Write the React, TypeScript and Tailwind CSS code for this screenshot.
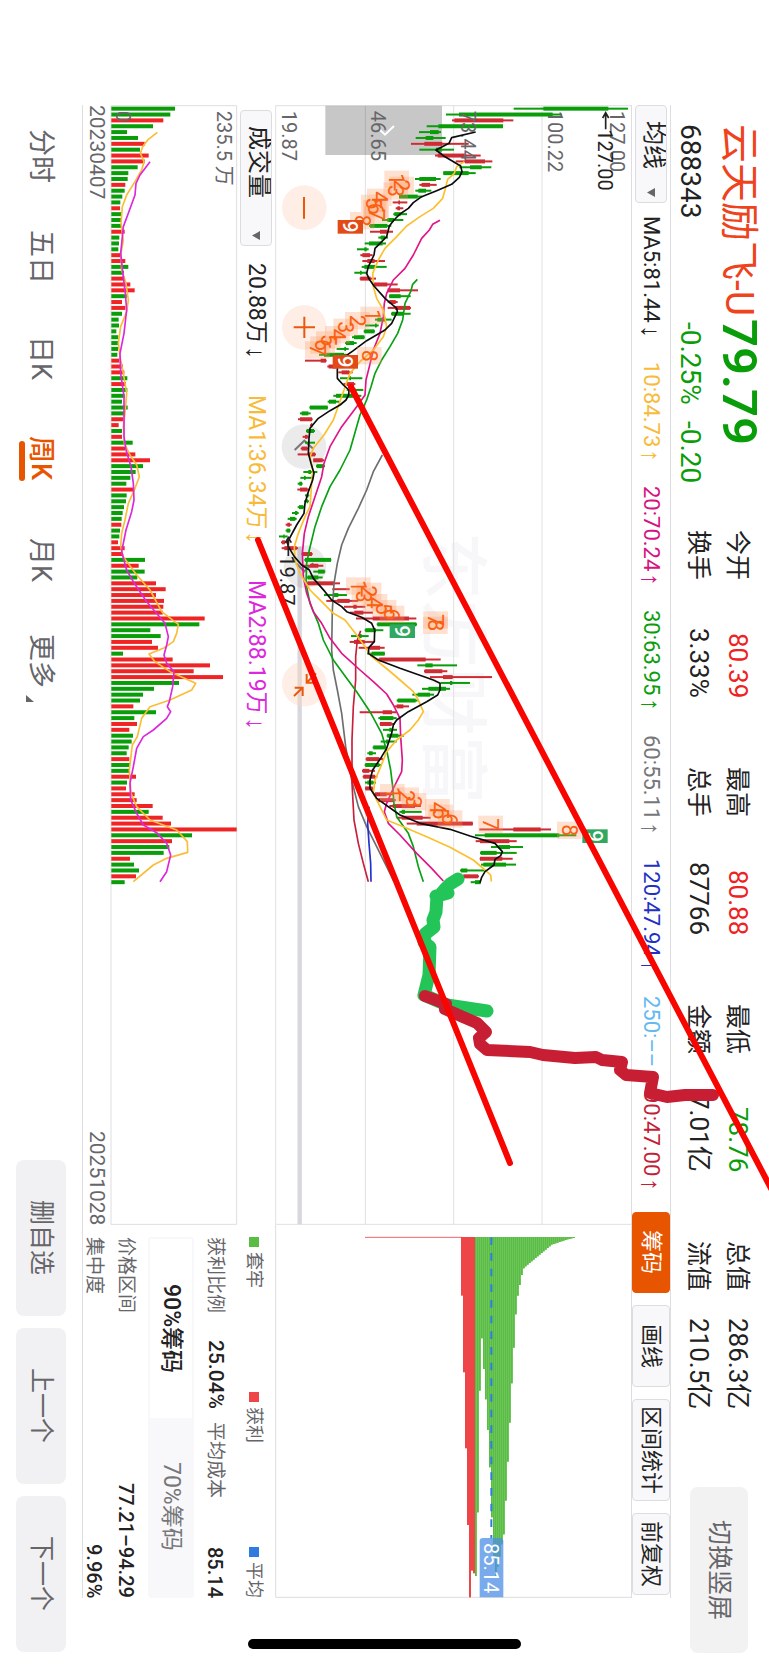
import type { ReactNode } from "react";

const GREEN = "#0a9d0a";
const RED = "#cf2b33";

/* low, bodyLow, bodyHigh, high per week; "u" closes up, "d" closes down */
const CANDLES = `d791,880,1075,1134 d588,627,908,936 u606,613,760,790 d530,565,759,759 d507,540,566,573 d497,527,550,587
u483,523,577,656 d508,558,575,612 u555,563,645,692 u617,645,705,727 d628,660,695,724 d580,580,656,677 d495,508,558,572
u508,515,540,560 d496,505,528,544 d447,447,503,517 u428,445,450,472 u437,442,450,460 d430,433,452,471 d396,412,432,460
d357,360,412,424 u360,390,412,429 d385,392,405,414 d344,357,398,408 d321,343,350,356 u331,337,360,368 u337,352,374,405
d335,343,375,410 d313,330,335,352 u329,331,362,378 u370,372,412,443 u413,413,450,504 d417,418,452,482 u413,418,437,443
u413,435,480,483 d423,425,460,482 d375,382,408,425 d345,375,380,386 d341,343,373,375 d306,312,343,344 d285,288,312,320
d260,283,288,296 d207,222,282,290 u165,212,228,230 u232,236,258,270 u265,275,298,308 d270,298,303,337 u280,290,312,316
d290,312,316,340 d250,258,310,334 d233,237,258,268 d178,180,233,234 d150,155,175,182 u144,150,186,188 u180,183,187,188
d168,170,192,195 u158,165,173,176 d165,175,178,195 u152,155,172,175 u143,175,195,198 u190,190,218,222 d198,200,220,225
d160,175,183,202 d151,162,167,187 d143,148,156,158 u142,150,172,180 d165,170,175,178 d162,170,174,177 d143,147,160,164
d126,135,142,146 d113,120,136,140 u107,112,120,125 d107,110,120,122 d87,100,104,113 u93,96,105,118 u95,103,140,144
u155,157,186,188 d163,165,243,244 u160,180,205,220 d190,204,224,226 d170,173,205,218 u170,172,253,270 u247,249,252,299
d222,252,265,291 u229,262,299,325 u282,310,320,346 u300,313,340,369 u318,368,477,499 d380,382,499,501 d344,346,378,400
d303,325,335,356 u299,312,344,373 u326,360,390,404 d352,365,404,405 u385,388,527,572 d502,526,548,621 u522,524,577,592
u540,579,608,726 d572,600,607,660 d516,535,588,600 d487,503,540,552 d440,443,497,503 u433,440,460,477 u329,398,426,440
d385,390,430,440 u389,390,425,434 d399,418,425,441 d410,412,445,462 d392,408,415,440 d368,370,405,406 d352,357,368,378
u347,349,388,401 d344,346,388,394 u336,338,358,375 u338,340,375,382 d345,352,370,378 u345,346,368,370 u370,375,410,432
u380,385,430,438 u418,428,495,513 d448,455,465,515 u440,455,518,542 u470,500,668,669 u688,790,872,903 d675,704,928,979
u677,690,778,800 d723,745,780,819 d690,692,740,800 u689,690,757,788 d693,700,768,798 d630,633,652,704 u630,640,684,687
d662,675,692,693`
  .split(/\s+/)
  .map((s) => ({ up: s[0] === "u", v: s.slice(1).split(",").map(Number) }));

const VOLUMES = `d525 d511 u490 d459 d381 d414 u434 d420 u446 u434 d413 d385 d383 u376 d374 d367 d361 u360 d363 d363 d364 u374
d358 d357 d355 u360 u376 d385 d372 u375 u391 u404 d380 u366 u376 d366 d356 d357 d349 d355 d354 d354 d352 u358 u369 u373
d382 u378 d382 d374 d366 d383 d374 u369 u356 d366 u366 d398 u375 u406 u450 d429 d407 d391 d379 u400 d380 d378 d372 d368
d365 u364 d360 d358 u354 u374 u368 d435 u416 d434 d412 u468 u497 u468 u492 u490 u488 u614 d598 d451 d482 u456 u474 d369
u518 u630 u581 u669 d537 d462 d429 d420 u400 d468 d403 u411 u388 d399 d395 d386 d380 u388 d390 d388 u408 d381 u378 u404
u410 u458 d446 u488 u513 u710 d576 u516 d508 d491 u390 d402 d417 u408 d374`
  .split(/\s+/)
  .map((s) => ({ up: s[0] === "u", v: Number(s.slice(1)) }));

const weekY = (i: number) => 56 + 17.58 * i;

const MA_LINES = [
  {
    color: "#6e6e6e",
    points:
      "397,1095 370,1145 350,1200 325,1255 295,1315 275,1365 262,1420 252,1480 247,1560 245,1680 250,1740 262,1800 275,1870 287,1970 305,2070 325,2150 350,2210 380,2270 410,2330 432,2375",
  },
  {
    color: "#c8203c",
    points:
      "332,1622 322,1650 317,1700 317,1770 310,1850 306,1950 306,2080 312,2190 325,2260 340,2320 355,2375",
  },
  { color: "#2430d0", points: "357,2150 353,2200 357,2260 362,2320 363,2375" },
  {
    color: "#0aa014",
    points:
      "502,568 488,583 482,605 465,640 458,690 443,730 420,770 395,810 375,850 363,890 350,930 330,975 300,1080 270,1140 240,1190 215,1250 195,1310 178,1380 170,1420 168,1480 180,1540 205,1600 220,1650 250,1710 290,1765 320,1805 360,1865 395,1930 412,1990 422,2040 428,2090 432,2140 440,2180 475,2230 490,2270 505,2330 520,2375",
  },
  {
    color: "#e01488",
    points:
      "570,391 548,403 538,420 515,445 490,495 465,535 430,570 410,610 403,640 400,680 390,730 370,780 358,830 348,870 345,915 320,950 275,1010 240,1070 222,1120 215,1160 195,1220 175,1280 163,1330 157,1390 160,1460 170,1510 190,1565 215,1600 240,1645 275,1690 330,1740 370,1775 410,1812 430,1845 450,1885 452,1940 457,2010 455,2045 430,2095 410,2140 403,2165 415,2200 450,2235 500,2290 545,2335 580,2373",
  },
  {
    color: "#fcc02e",
    points:
      "643,215 620,230 613,250 593,268 585,300 578,325 550,355 510,380 470,408 440,440 405,475 385,510 368,550 370,590 380,625 400,660 410,710 400,740 370,780 330,815 300,850 285,890 282,900 268,940 250,990 222,1035 190,1075 180,1100 188,1140 180,1250 165,1280 145,1330 133,1370 135,1410 150,1450 180,1500 215,1535 250,1570 285,1590 320,1635 345,1670 365,1700 415,1740 450,1770 490,1805 505,1830 520,1865 505,1890 480,1920 440,1950 410,1985 390,2035 375,2070 370,2110 390,2150 410,2190 460,2210 530,2240 600,2272 670,2310 705,2340 722,2355 724,2375",
  },
  {
    color: "#0c0c0c",
    points:
      "677,126 605,143 597,160 558,180 580,197 632,228 636,245 628,262 605,283 560,302 515,320 490,338 475,355 450,372 432,390 418,408 410,440 375,475 372,495 355,530 350,550 358,568 372,588 405,625 440,655 442,665 425,700 405,720 350,752 310,782 270,810 262,830 262,865 280,885 297,900 296,915 288,930 270,945 240,962 205,985 180,1015 177,1045 175,1090 183,1120 192,1150 188,1170 175,1205 165,1240 162,1270 140,1305 112,1357 115,1370 133,1400 155,1425 178,1440 190,1465 225,1505 245,1530 275,1550 290,1565 335,1582 365,1600 374,1620 373,1655 357,1672 355,1690 385,1710 450,1735 550,1770 570,1780 570,1800 563,1815 530,1835 475,1865 440,1890 430,1905 425,1930 410,1975 395,2000 368,2040 360,2070 360,2095 380,2125 450,2175 510,2200 600,2218 660,2238 735,2260 757,2285 752,2297 735,2308 732,2325 705,2345 695,2362 690,2378",
  },
];

const VOLUME_LINES = [
  {
    color: "#f9bd38",
    points:
      "472,127 445,148 428,170 421,190 432,215 425,240 405,275 380,315 367,350 363,400 370,450 363,490 365,540 378,580 385,630 380,665 362,710 355,760 360,800 370,850 380,910 376,960 370,1010 373,1060 390,1095 410,1125 418,1160 405,1195 385,1240 375,1290 365,1330 362,1370 370,1400 410,1455 450,1500 485,1565 535,1603 530,1630 520,1655 490,1675 447,1692 465,1715 510,1745 587,1780 575,1800 510,1830 450,1850 425,1885 412,1940 397,1965 388,2040 393,2110 410,2150 450,2190 530,2220 562,2255 563,2287 500,2305 460,2325 400,2375",
  },
  {
    color: "#dc28dc",
    points:
      "450,215 420,255 408,280 405,315 385,370 370,410 362,490 368,545 376,610 380,660 372,730 360,790 362,850 372,920 372,1040 378,1080 393,1130 400,1180 402,1230 395,1265 378,1320 365,1385 380,1440 400,1475 440,1535 495,1600 505,1640 500,1665 492,1695 500,1720 522,1745 518,1790 508,1835 502,1850 512,1865 500,1885 460,1920 430,1940 410,1975 400,2030 390,2080 392,2130 410,2170 430,2205 470,2228 500,2260 512,2295 500,2345 480,2375",
  },
];

/* Nine-turn sequence counts: [digit, price, time] */
const COUNTS: [number, number, number][] = [
  [1, 440, 268], [2, 455, 286], [3, 437, 303], [4, 388, 322], [5, 370, 340], [6, 376, 356], [7, 380, 374], [8, 337, 392],
  [1, 368, 676], [2, 322, 692], [3, 287, 712], [4, 262, 734], [5, 235, 750], [6, 218, 765], [7, 202, 780], [8, 358, 797],
  [1, 325, 1488], [2, 357, 1504], [3, 342, 1520], [4, 375, 1538], [5, 402, 1556], [6, 426, 1573], [7, 557, 1590], [8, 556, 1606],
  [1, 427, 2108], [2, 470, 2118], [3, 492, 2135], [4, 562, 2153], [5, 572, 2170], [6, 600, 2187], [7, 722, 2203], [8, 958, 2221],
];
const NINES: [string, number, number][] = [
  ["#e24a18", 301, 410], ["#e24a18", 286, 815], ["#30a860", 457, 1623], ["#30a860", 1035, 2238],
];

const AXIS: [string, number][] = [
  ["19.87", 116], ["46.65", 384], ["73.44", 655], ["100.22", 915], ["127.00", 1101],
];

/* Chip distribution steps: [price, depth] */
const PROFIT = [[633, 317], [639, 547], [645, 775], [651, 1005], [657, 1222], [663, 1142], [669, 1150]];
const TRAPPED = [
  [675, 1158], [681, 967], [687, 602], [693, 445], [699, 537], [705, 628], [711, 720], [717, 832], [723, 982], [729, 1100],
  [735, 1160], [741, 1130], [747, 1100], [753, 1063], [759, 1033], [765, 932], [771, 815], [777, 698], [783, 580], [789, 473],
  [795, 373], [801, 317], [807, 285], [813, 255], [819, 235], [825, 229], [831, 224], [837, 219], [843, 214], [849, 209],
  [855, 204], [861, 199], [867, 194], [873, 189], [879, 184], [885, 179], [891, 174], [897, 169], [903, 164], [909, 162],
  [915, 160], [921, 158], [927, 156], [933, 154], [939, 152], [945, 150], [951, 148], [957, 147], [963, 145], [969, 144],
];

function Label({ x, y, size = 60, fill, anchor, weight, children }: {
  x: number; y: number; size?: number; fill: string; anchor?: "start" | "middle"; weight?: number; children: ReactNode;
}) {
  return (
    <text
      className="[writing-mode:horizontal-tb]"
      transform={`translate(${x - size * 0.355} ${y}) rotate(90)`}
      fontSize={size}
      fontWeight={weight}
      fill={fill}
      textAnchor={anchor}
    >
      {children}
    </text>
  );
}

function PriceChart() {
  return (
    <svg viewBox="75 45 1068 3360" preserveAspectRatio="xMinYMin meet" className="block h-full w-full overflow-visible" role="img" aria-label="周K">
      <Label x={610} y={1325} size={204} weight={500} fill="#f7f7f9">东方财富</Label>
      <g stroke="#e0e0e3" strokeWidth="3">
        {[77, 346, 611, 876].map((x) => (
          <path key={x} d={`M${x} 46V3403`} />
        ))}
        <path d="M77 47H1143M77 3403H1143" />
      </g>
      <path d="M149 1370V3403" stroke="#d8d7de" strokeWidth="13" />
      {[353, 712, 1782].map((y) => (
        <circle key={y} cx="163" cy={y} r="67" fill="#fdd5c0" fillOpacity=".4" />
      ))}
      <g fill="#000" fillOpacity=".08">
        <circle cx="162" cy="1070" r="67" />
        <circle cx="165" cy="1430" r="64" />
      </g>
      <path d="M226 47H576V195H226Z" fill="#000" fillOpacity=".22" />
      <g fill="none" stroke="#e8590c" strokeWidth="6">
        <path d="M162 321V386M163 680V744M131 712H195" />
        <path d="M170 1752V1778H195M172 1776L198 1750M134 1793H158V1818M156 1795L132 1818" />
      </g>
      <g fill="none" strokeWidth="6">
        <path d="M134 1080L163 1052L191 1078M138 1420L163 1444L190 1420" stroke="#77777c" />
        <path d="M388 118L405 134L432 108" stroke="#fff" />
      </g>
      {CANDLES.map(({ up, v }, i) => (
        <g key={i} fill={up ? RED : GREEN}>
          <rect x={v[0]} y={weekY(i) - 3} width={v[3] - v[0]} height="6" />
          <rect x={v[1]} y={weekY(i) - 6} width={v[2] - v[1]} height="12" />
        </g>
      ))}
      {AXIS.map(([t, x]) => (
        <Label key={t} x={x} y={62} fill="#66666a">{t}</Label>
      ))}
      {MA_LINES.map((l) => (
        <polyline key={l.color} points={l.points} fill="none" stroke={l.color} strokeWidth="5" strokeLinejoin="round" />
      ))}
      <g fill="none" stroke="#222" strokeWidth="5">
        <path d="M1067 118V70M1058 84L1067 68L1076 84M115 1398V1345M106 1358L115 1343L124 1358" />
      </g>
      <Label x={1066} y={118} fill="#222">127.00</Label>
      <Label x={112} y={1396} fill="#222">19.87</Label>
      {COUNTS.map(([, x, y], i) => (
        <rect key={i} x={x - 37} y={y - 26} width="74" height="52" fill="#fb9a68" fillOpacity=".3" />
      ))}
      {COUNTS.map(([n, x, y], i) => (
        <Label key={i} x={x} y={y} size={64} anchor="middle" fill="#fb5f10">{n}</Label>
      ))}
      {NINES.map(([c, x, y], i) => (
        <g key={i}>
          <rect x={x - 38} y={y - 20} width="76" height="41" fill={c} />
          <Label x={x} y={y} size={62} anchor="middle" weight={500} fill="#fff">9</Label>
        </g>
      ))}
    </svg>
  );
}

function ChipChart() {
  return (
    <svg viewBox="75 105 1068 1119" preserveAspectRatio="xMinYMin meet" className="block h-full w-full overflow-visible" role="img" aria-label="筹码">
      <path d="M77 104V1222H1143" fill="none" stroke="#dcdde2" strokeWidth="3" />
      <path d="M345 142H635" stroke="#e66" strokeWidth="3" />
      {PROFIT.map(([x, d]) => (
        <rect key={x} x={x} y="141" width="6" height={d - 141} fill="#ee4648" />
      ))}
      {TRAPPED.map(([x, d]) => (
        <g key={x} fill="#58bd42">
          <rect x={x} y="141" width="6" height={d - 141} fillOpacity=".8" />
          <rect x={x} y="141" width="4" height={d - 141} />
        </g>
      ))}
      <path d="M724 142V1045" stroke="#2f7be0" strokeWidth="6" strokeDasharray="23 24" />
      <path d="M689 1222V1054Q689 1044 699 1044H750Q760 1044 760 1054V1222Z" fill="#4c8fe6" fillOpacity=".75" />
      <Label x={724} y={1059} fill="#fff">85.14</Label>
    </svg>
  );
}

function VolumeChart() {
  return (
    <svg viewBox="333 45 378 3360" preserveAspectRatio="xMinYMin meet" className="block h-full w-full overflow-visible" role="img" aria-label="成交量">
      <path d="M333 47H710V3403H333Z" fill="none" stroke="#dedee2" strokeWidth="3" />
      {VOLUMES.map(({ up, v }, i) => (
        <rect key={i} x="334" y={weekY(i) - 6} width={v - 334} height="12" fill={up ? "#f02424" : GREEN} />
      ))}
      {VOLUME_LINES.map((l) => (
        <polyline key={l.color} points={l.points} fill="none" stroke={l.color} strokeWidth="5" strokeLinejoin="round" />
      ))}
      <Label x={672} y={62} fill="#66666a">235.5 万</Label>
      <Label x={369} y={62} fill="#66666a">0</Label>
    </svg>
  );
}

function Annotations() {
  return (
    <svg viewBox="0 0 769 1665" preserveAspectRatio="none" className="pointer-events-none absolute inset-0 h-full w-full" aria-hidden="true">
      <g fill="none" strokeLinecap="round" strokeLinejoin="round">
        <path
          d="M458 879L450 884L446 888L440 895L436 896L448 893L437 896L436 912L433 920L434 927L425 934L424 942L430 947L429 975L424 995L447 1005L487 1011"
          stroke="#24c558"
          strokeWidth="13"
        />
        <path
          d="M425 996L446 1004L445 1009L463 1017L477 1023L486 1032L479 1038L480 1044L487 1050L530 1052L543 1055L575 1058L596 1057L602 1060L622 1062L620 1070L626 1075L653 1077L650 1093L667 1097L685 1095L713 1095"
          stroke="#c81e34"
          strokeWidth="12"
        />
      </g>
      <path d="M258 540L510 1163M351 387L775 1196" stroke="#f90500" strokeWidth="6" strokeLinecap="round" />
    </svg>
  );
}

const QUOTES = [
  [["今开", "80.39", "text-[#ee2222]"], ["换手", "3.33%", ""]],
  [["最高", "80.88", "text-[#ee2222]"], ["总手", "87766", ""]],
  [["最低", "78.76", "text-[#0a9d0a]"], ["金额", "7.01亿", ""]],
  [["总值", "286.3亿", ""], ["流值", "210.5亿", ""]],
];

const AVERAGES = [
  ["MA5:81.44", "↓", "text-[#222]"],
  ["10:84.73", "↑", "text-[#f7bb3a]"],
  ["20:70.24", "↑", "text-[#d81283]"],
  ["30:63.95", "↑", "text-[#0a9d0a]"],
  ["60:55.11", "↑", "text-[#77777a]"],
  ["120:47.94", "↑", "text-[#2330c4]"],
  ["250:––", "", "text-[#63b9f2]"],
  ["90:47.00", "↑", "text-[#c41f38]"],
];

function Arrow({ children }: { children: ReactNode }) {
  return <span className="ms-[2px] font-['Liberation_Sans'] text-[26px] leading-none">{children}</span>;
}

function Picker({ label, options, className }: { label: string; options: string[]; className: string }) {
  return (
    <div className={`relative shrink-0 ${className}`}>
      <select
        aria-label={label}
        className="block h-full w-full appearance-none rounded-sm border border-[#dddde0] bg-[#f8f8fa] p-0 ps-[15px] text-[24px] leading-none text-[#222] [text-orientation:sideways] [writing-mode:vertical-rl]"
      >
        {options.map((o) => (
          <option key={o}>{o}</option>
        ))}
      </select>
      <svg viewBox="0 0 8 9" className="pointer-events-none absolute bottom-[6px] left-[12px] h-[9px] w-[8px]" aria-hidden="true">
        <path d="M0 4.5L8 0V9Z" fill="#666" />
      </svg>
    </div>
  );
}

const TOOLS = [
  ["筹码", "h-[81px] border-[#e85500] bg-[#e85500] text-white"],
  ["画线", "h-[82px] border-[#dddde0] bg-[#f8f8fa]"],
  ["区间统计", "h-[102px] border-[#dddde0] bg-[#f8f8fa]"],
  ["前复权", "h-[82px] border-[#dddde0] bg-[#f8f8fa]"],
];

const TABS = ["分时", "五日", "日K", "周K", "月K", "更多"];

export default function App() {
  return (
    <main className="relative flex h-screen w-full flex-col overflow-hidden bg-white font-[Roboto,'Noto_Sans_CJK_SC',sans-serif] text-[#222] [text-orientation:sideways] [writing-mode:vertical-rl]">
      <header className="flex w-[98px] shrink-0 pt-[124px] pb-[12px]">
        <div className="h-[406px] shrink-0 pr-[6px]">
          <h1 className="flex w-[48px] items-center text-[39px] leading-[48px] whitespace-nowrap text-[#ee431c]">
            云天励飞-U
            <span className="ms-[3px] text-[49px] font-semibold text-[#0a9d0a]">79.79</span>
          </h1>
          <p className="flex w-[50px] text-[28px] leading-[50px]">
            <span className="h-[198px]">688343</span>
            <span className="h-[99px] text-[#0a9d0a]">-0.25%</span>
            <span className="text-[#0a9d0a]">-0.20</span>
          </p>
        </div>
        <dl className="flex shrink-0 gap-[69px] pr-[12px]">
          {QUOTES.map((col) => (
            <div key={col[0][0]} className="flex h-[168px] flex-col">
              {col.map(([k, v, c]) => (
                <div key={k} className="flex w-[39px] justify-between text-[26px] leading-[39px] whitespace-nowrap">
                  <dt className="text-[25px]">{k}</dt>
                  <dd className={c}>{v}</dd>
                </div>
              ))}
            </div>
          ))}
        </dl>
        <button className="mr-[21px] ms-auto h-[166px] w-[58px] rounded-lg bg-[#f2f2f3] text-[25px] text-[#66666a]">切换竖屏</button>
      </header>

      <div className="flex w-[40px] shrink-0 pt-[105px] pb-[67px]">
        <div className="flex grow items-center border-r border-l border-[#dedee2]">
          <Picker label="指标" options={["均线"]} className="h-[98px] w-[32px]" />
          <ul className="ms-[13px] flex grow items-center gap-[24px] text-[22px] whitespace-nowrap">
            {AVERAGES.map(([t, a, c]) => (
              <li key={t} className={`flex items-center ${c}`}>
                {t}
                {a && <Arrow>{a}</Arrow>}
              </li>
            ))}
          </ul>
          <div className="flex shrink-0 gap-[12px] pb-[3px]">
            {TOOLS.map(([t, c]) => (
              <button key={t} className={`w-[38px] rounded-sm border text-[22px] ${c}`}>
                {t}
              </button>
            ))}
          </div>
        </div>
      </div>

      <section className="flex min-w-0 grow pt-[105px] pb-[67px]">
        <div className="min-h-0 flex-[1120]">
          <PriceChart />
        </div>
        <div className="min-h-0 flex-[373]">
          <ChipChart />
        </div>
      </section>

      <section className="flex w-[193px] shrink-0 pt-[105px] pb-[67px]">
        <div className="flex min-h-0 flex-[1120] flex-col">
          <div className="flex w-[38px] shrink-0 items-center pt-[5px] text-[23px] whitespace-nowrap">
            <Picker label="副图" options={["成交量"]} className="h-[136px] w-[32px]" />
            <span className="ms-[17px] flex items-center">20.88万<Arrow>↓</Arrow></span>
            <span className="ms-[36px] flex items-center text-[#f7bb3a]">MA1:36.34万<Arrow>↓</Arrow></span>
            <span className="ms-[36px] flex items-center text-[#dc28dc]">MA2:88.19万<Arrow>↓</Arrow></span>
          </div>
          <div className="w-[126px] shrink-0">
            <VolumeChart />
          </div>
          <div className="flex w-[29px] shrink-0 justify-between border-l border-[#dedee2] text-[21px] leading-[28px] text-[#66666a]">
            <time>20230407</time>
            <time>20251028</time>
          </div>
        </div>
        <div className="min-h-0 flex-[373] border-l border-[#dedee2]">
          <div className="flex h-full flex-col pt-[12px] text-[20px] whitespace-nowrap">
            <ul className="mr-[2px] flex w-[38px] shrink-0 items-center justify-between text-[18px] text-[#66666a]">
              {[["套牢", "bg-[#58bd42]"], ["获利", "bg-[#ee4648]"], ["平均", "bg-[#2f7be0]"]].map(([t, c]) => (
                <li key={t} className="flex items-center gap-[5px]">
                  <span className={`h-[10px] w-[10px] ${c}`} />
                  {t}
                </li>
              ))}
            </ul>
            <dl className="flex w-[40px] shrink-0 items-center justify-between">
              <dt className="text-[19px] text-[#66666a]">获利比例</dt>
              <dd className="ms-[14px] text-[21px] font-medium">25.04%</dd>
              <dt className="text-[19px] text-[#66666a]">平均成本</dt>
              <dd className="ms-[36px] font-medium">85.14</dd>
            </dl>
            <div className="mr-[1px] flex w-[46px] shrink-0 rounded-sm bg-[#f8f8fa] p-[2px] text-[23px]">
              <button className="flex-1 bg-white font-medium">90%筹码</button>
              <button className="flex-1 text-[#77777a]">70%筹码</button>
            </div>
            <dl className="mr-[6px]">
              {[["价格区间", "77.21–94.29"], ["集中度", "9.96%"]].map(([k, v]) => (
                <div key={k} className="flex w-[32px] items-center justify-between leading-[32px]">
                  <dt className="text-[19px] text-[#66666a]">{k}</dt>
                  <dd className="font-medium">{v}</dd>
                </div>
              ))}
            </dl>
          </div>
        </div>
      </section>

      <footer className="flex w-[82px] shrink-0 justify-between pt-[105px] pb-[13px]">
        <nav className="flex">
          {TABS.map((t) => (
            <a
              key={t}
              href="#"
              className={`relative flex h-[101px] w-[82px] items-center justify-center text-[27px] ${t === "周K" ? "font-medium text-[#e85500]" : "text-[#66666a]"}`}
            >
              {t}
              {t === "周K" && <span className="absolute bottom-[28px] left-[19px] h-[40px] w-[6px] rounded-full bg-[#e85500]" />}
              {t === "更多" && (
                <svg viewBox="0 0 8 7" className="absolute bottom-[9px] left-[26px] h-[7px] w-[8px]" aria-hidden="true">
                  <path d="M0 0V7H8Z" fill="#66666a" />
                </svg>
              )}
            </a>
          ))}
        </nav>
        <div className="flex items-center gap-[12px]">
          {["删自选", "上一个", "下一个"].map((t) => (
            <button key={t} className="h-[156px] w-[50px] rounded-lg bg-[#f1f1f3] text-[25px] text-[#66666a]">
              {t}
            </button>
          ))}
        </div>
      </footer>

      <Annotations />
      <div className="absolute bottom-[16px] left-[248px] h-[10px] w-[273px] rounded-full bg-black" />
    </main>
  );
}
